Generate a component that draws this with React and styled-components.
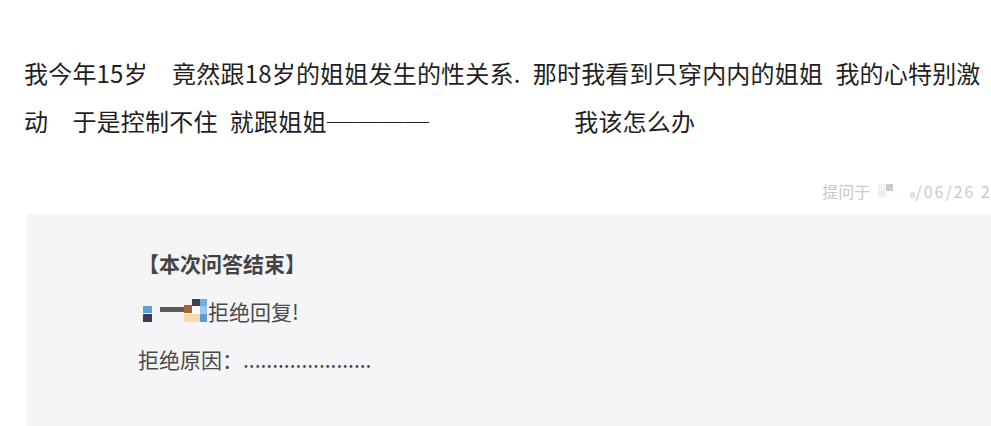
import styled, { createGlobalStyle } from "styled-components";

const GlobalStyle = createGlobalStyle`
  html, body {
    margin: 0;
    padding: 0;
    background: #ffffff;
    overflow: hidden;
  }
  body {
    font-family: "Noto Sans CJK SC", "Noto Sans", sans-serif;
  }
`;

const NAME_CELLS = [
  { x: 0, y: 7, w: 4, h: 7, c: "#f6f1dc" },
  { x: 8, y: 7, w: 9, h: 7, c: "#5aa2de" },
  { x: 8, y: 15, w: 9, h: 8, c: "#3b3d57" },
  { x: 25, y: 8, w: 24, h: 5, c: "#5b5b5d" },
  { x: 49, y: 6, w: 8, h: 8, c: "#a9623c" },
  { x: 57, y: 0, w: 8, h: 7, c: "#3f3f48" },
  { x: 65, y: 0, w: 7, h: 7, c: "#70aee3" },
  { x: 57, y: 7, w: 8, h: 8, c: "#fbfbfd" },
  { x: 65, y: 7, w: 7, h: 8, c: "#9cc8ee" },
  { x: 49, y: 15, w: 16, h: 8, c: "#f3dcaa" },
  { x: 65, y: 15, w: 7, h: 8, c: "#5c9bd8" },
];

const DATE_CELLS = [
  { x: 0, y: 0, w: 7, h: 7, c: "#eef2f7" },
  { x: 8, y: 0, w: 7, h: 7, c: "#c9c9cf" },
  { x: 0, y: 7, w: 8, h: 6, c: "#f8ebe2" },
  { x: 32, y: 8, w: 5, h: 6, c: "#f2dfd4" },
];

function Mosaic({ cells, width, height }) {
  return (
    <MosaicSvg width={width} height={height} viewBox={`0 0 ${width} ${height}`}>
      {cells.map((cell, i) => (
        <rect key={i} x={cell.x} y={cell.y} width={cell.w} height={cell.h} fill={cell.c} />
      ))}
    </MosaicSvg>
  );
}

export default function App() {
  return (
    <>
      <GlobalStyle />
      <Page>
        <Question>
          我今年15岁{"\u3000"}竟然跟18岁的姐姐发生的性关系.{"\u2002"}那时我看到只穿内内的姐姐{"\u2002"}我的心特别激
          <br />
          动{"\u3000"}于是控制不住{"\u2002"}就跟姐姐<Dash>────</Dash>{"\u3000\u3000\u3000\u3000\u3000\u3000"}我该怎么办
        </Question>
        <MetaRow>
          <Meta>
            提问于
            <Mosaic cells={DATE_CELLS} width={37} height={14} />
            <DateText>/06/26 21:36</DateText>
          </Meta>
        </MetaRow>
        <ReplyBox>
          <ReplyTitle>【本次问答结束】</ReplyTitle>
          <ReplyLine>
            <Mosaic cells={NAME_CELLS} width={73} height={24} />
            拒绝回复!
          </ReplyLine>
          <ReplyLine>拒绝原因：......................</ReplyLine>
        </ReplyBox>
      </Page>
    </>
  );
}

const Page = styled.div`
  display: flex;
  flex-direction: column;
  width: 991px;
  height: 426px;
  padding-top: 49px;
  box-sizing: border-box;
  overflow: hidden;
`;

const Question = styled.p`
  margin: 0;
  padding: 0 0 0 24px;
  font-size: 24px;
  line-height: 48px;
  letter-spacing: 0.2px;
  color: #1f1f1f;
  white-space: nowrap;
`;

const Dash = styled.span`
  font-size: 25.6px;
  letter-spacing: 0;
  vertical-align: top;
`;

const MetaRow = styled.div`
  display: flex;
  justify-content: flex-end;
  margin-top: 34px;
  margin-right: -40px;
`;

const Meta = styled.span`
  display: inline-flex;
  align-items: center;
  font-size: 16px;
  line-height: 24px;
  color: #c9c9c9;
  white-space: nowrap;
`;

const DateText = styled.span`
  letter-spacing: 2px;
`;

const MosaicSvg = styled.svg`
  display: inline-block;
  flex: none;
  margin: 0 0 0 8px;
`;

const ReplyBox = styled.section`
  flex: 1;
  margin: 11px 0 0 26px;
  padding: 25px 0 0 112px;
  background: #f5f5f7;
  border-top-left-radius: 4px;
`;

const ReplyTitle = styled.div`
  font-size: 21px;
  line-height: 48px;
  font-weight: 700;
  color: #444444;
`;

const ReplyLine = styled.div`
  display: flex;
  align-items: center;
  font-size: 21px;
  line-height: 48px;
  color: #4a4a4a;

  & > svg {
    margin: 0 0 0 -3px;
  }
`;
